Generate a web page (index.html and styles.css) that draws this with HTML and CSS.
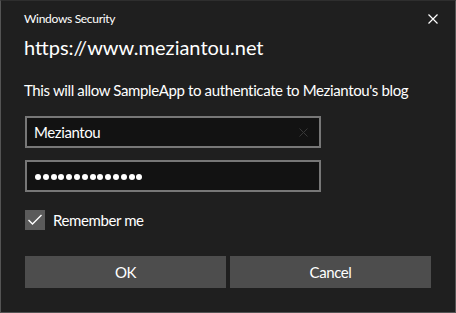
FILE: index.html
```html
<!DOCTYPE html>
<html lang="en">
<head>
    <meta charset="UTF-8">
    <meta name="viewport" content="width=device-width, initial-scale=1.0">
    <link rel="stylesheet" href="styles.css">
</head>
<body>

    <div class="dialog">
        <div class="titlebar">
            <span class="title">Windows Security</span>
            <div class="close-button">
                <svg width="10" height="10" viewBox="0 0 10 10">
                    <path d="M0.5 0.5 L9.5 9.5 M9.5 0.5 L0.5 9.5" stroke="#fff" stroke-width="1.2" fill="none"/>
                </svg>
            </div>
        </div>

        <div class="site">https://www.meziantou.net</div>
        <div class="message">This will allow SampleApp to authenticate to Meziantou's blog</div>

        <div class="field">
            <span class="field-text">Meziantou</span>
            <svg class="clear-icon" width="9" height="9" viewBox="0 0 9 9">
                <path d="M0.5 0.5 L8.5 8.5 M8.5 0.5 L0.5 8.5" stroke="#383838" stroke-width="1" fill="none"/>
            </svg>
        </div>
        <div class="field field-password">
            <div class="dots">
                <i></i><i></i><i></i><i></i><i></i><i></i><i></i>
                <i></i><i></i><i></i><i></i><i></i><i></i><i></i>
            </div>
        </div>

        <label class="remember">
            <span class="checkbox">
                <svg width="16" height="12" viewBox="0 0 16 12">
                    <path d="M1.5 6 L5.5 10 L14.5 1" stroke="#fff" stroke-width="1.4" fill="none"/>
                </svg>
            </span>
            <span>Remember me</span>
        </label>

        <div class="buttons">
            <div class="button">OK</div>
            <div class="button">Cancel</div>
        </div>
    </div>

</body>
</html>
```

FILE: styles.css
```css
body {
    margin: 0;
    padding: 0;
    background-color: #1f1f1f;
    font-family: "Lato", "Open Sans", sans-serif;
    color: #fff;
}

.dialog {
    box-sizing: border-box;
    width: 456px;
    height: 313px;
    border: 1px solid #545454;
    border-top-color: #2e2e2e;
    background-color: #1f1f1f;
    padding: 0 24px;
    display: flex;
    flex-direction: column;
    white-space: nowrap;
    letter-spacing: -0.4px;
}

.titlebar {
    height: 32px;
    display: flex;
    align-items: center;
    justify-content: space-between;
}

.title {
    font-size: 12px;
    margin-left: -1px;
    padding-top: 2px;
    letter-spacing: -0.3px;
}

.close-button {
    width: 10px;
    height: 10px;
    margin-right: -7px;
    margin-top: 3px;
    display: flex;
}

.site {
    font-size: 20px;
    line-height: 28px;
    margin-left: -1px;
    letter-spacing: 0;
}

.message {
    font-size: 15px;
    line-height: 20px;
    margin-top: 19px;
    margin-left: -1px;
    letter-spacing: -0.37px;
}

.field {
    box-sizing: border-box;
    width: 296px;
    height: 32px;
    margin-top: 16px;
    border: 2px solid #777;
    background-color: #121212;
    display: flex;
    align-items: center;
    justify-content: space-between;
    padding: 0 10px 0 7px;
    font-size: 15px;
}

.field-password {
    margin-top: 12px;
}

.clear-icon {
    margin-right: 1px;
}

.dots {
    display: flex;
    gap: 1.8px;
    padding: 2px 0 0 1px;
}

.dots i {
    width: 6px;
    height: 6px;
    border-radius: 50%;
    background-color: #fff;
}

.remember {
    display: flex;
    align-items: center;
    margin-top: 18px;
    font-size: 15px;
}

.checkbox {
    width: 20px;
    height: 20px;
    background-color: #5b5b5b;
    display: flex;
    align-items: center;
    justify-content: center;
    margin-right: 8px;
}

.buttons {
    display: grid;
    grid-template-columns: 1fr 1fr;
    gap: 4px;
    margin-top: 26px;
}

.button {
    height: 32px;
    background-color: #4d4d4d;
    display: flex;
    align-items: center;
    justify-content: center;
    font-size: 15px;
}
```
